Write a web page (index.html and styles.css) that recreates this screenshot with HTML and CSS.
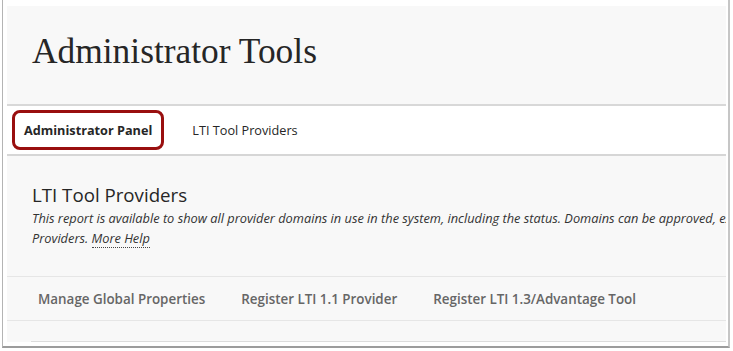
FILE: index.html
```html
<!DOCTYPE html>
<html lang="en">
<head>
<meta charset="utf-8">
<title>Administrator Tools</title>
<link rel="stylesheet" href="styles.css">
</head>
<body>
<div class="window">
  <div class="page">
    <header class="page-header">
      <h1 class="page-title">Administrator Tools</h1>
    </header>
    <nav class="tabs">
      <a class="tab tab-active" href="#">Administrator Panel</a>
      <a class="tab" href="#">LTI Tool Providers</a>
    </nav>
    <main class="content">
      <section class="intro">
        <h2 class="section-title">LTI Tool Providers</h2>
        <p class="desc"><span class="desc-line">This report is available to show all provider domains in use in the system, including the status. Domains can be approved, excluded, or set to pending. Manage the list of approved Tool</span>Providers. <a class="help" href="#">More Help</a></p>
      </section>
      <div class="actions">
        <a class="action" href="#">Manage Global Properties</a>
        <a class="action" href="#">Register LTI 1.1 Provider</a>
        <a class="action" href="#">Register LTI 1.3/Advantage Tool</a>
      </div>
      <div class="table-top"></div>
    </main>
  </div>
</div>
</body>
</html>
```

FILE: styles.css
```css
* { box-sizing: content-box; }
html, body {
  margin: 0;
  padding: 0;
  background: #ffffff;
}
body {
  font-family: "Open Sans", "Noto Sans", sans-serif;
  color: #333;
}
.window {
  margin-left: 2px;
  width: 719px;
  height: 336px;
  padding: 6px 2px 4px 4px;
  border-left: 1px solid #b4b4b4;
  border-right: 2px solid #c6c6c6;
  border-bottom: 2px solid #9c9c9c;
  background: #ffffff;
}
.page {
  width: 719px;
  height: 336px;
  overflow: hidden;
  background: #f8f8f8;
}
.page-header {
  height: 73px;
  padding: 25px 0 0 25px;
  border-bottom: 2px solid #d8d8d8;
}
.page-title {
  margin: 0;
  font-family: "Liberation Serif", "DejaVu Serif", serif;
  font-weight: normal;
  font-size: 35.4px;
  line-height: 40px;
  color: #262626;
  white-space: nowrap;
}
.tabs {
  display: flex;
  align-items: center;
  gap: 16px;
  height: 48px;
  padding-left: 5px;
  background: #ffffff;
  border-bottom: 2px solid #d6d6d6;
}
.tab {
  display: block;
  height: 34px;
  line-height: 34px;
  padding: 0 9px;
  border: 3px solid transparent;
  border-radius: 8px;
  font-size: 12.7px;
  color: #262626;
  text-decoration: none;
  white-space: nowrap;
}
.tab-active {
  font-weight: 700;
  border-color: #990f0f;
}
.intro {
  padding: 27px 25px 0 25px;
}
.section-title {
  margin: 0;
  font-size: 18.7px;
  font-weight: 400;
  line-height: 24px;
  color: #262626;
  white-space: nowrap;
}
.desc {
  margin: 1px 0 0 0;
  font-size: 12.8px;
  font-style: italic;
  line-height: 20px;
  color: #333;
}
.desc-line {
  display: block;
  white-space: nowrap;
}
.help {
  color: #333;
  text-decoration: none;
  border-bottom: 1px dotted #444;
}
.actions {
  display: flex;
  align-items: center;
  gap: 36px;
  height: 43px;
  margin-top: 28px;
  padding-left: 31px;
  border-top: 1px solid #e6e6e6;
  border-bottom: 1px solid #e6e6e6;
}
.action {
  font-size: 13.4px;
  font-weight: 600;
  color: #666;
  text-decoration: none;
  white-space: nowrap;
}
.table-top {
  margin: 20px 0 0 24px;
  height: 10px;
  border-top: 1px solid #dcdcdc;
  background: #f8f8f8;
}
```
